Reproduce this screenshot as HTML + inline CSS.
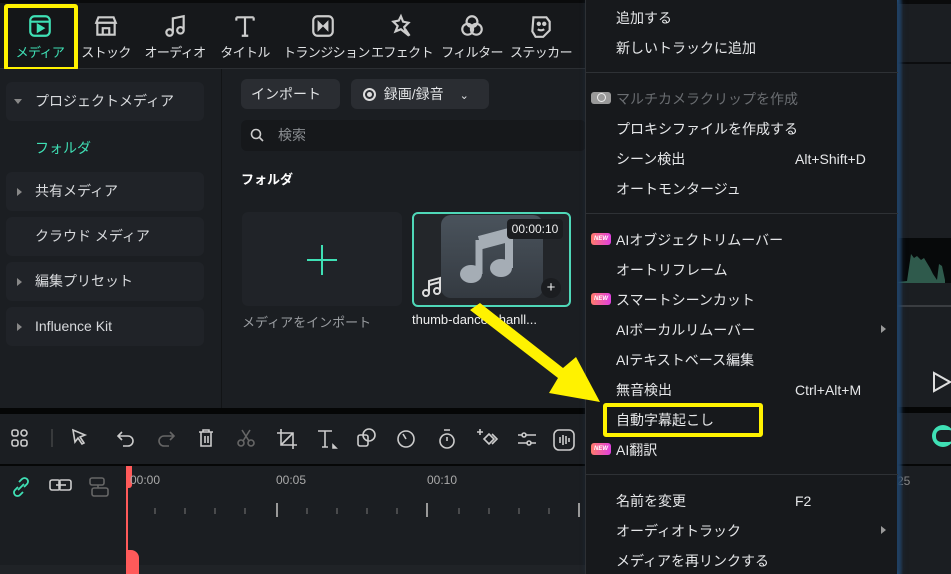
<!DOCTYPE html>
<html><head><meta charset="utf-8"><style>
*{margin:0;padding:0;box-sizing:border-box}
body{width:951px;height:574px;overflow:hidden;background:#1b1e22;font-family:"Liberation Sans","Noto Sans CJK JP",sans-serif;color:#d8dadd;position:relative}
.abs{position:absolute}
.top{left:0;top:0;width:951px;height:69px;background:#16181b;border-bottom:1px solid #2c2f33}
.tab{position:absolute;top:13px;width:70px;text-align:center;font-size:13px;color:#e0e2e4;white-space:nowrap;letter-spacing:-0.6px;line-height:18px}
.tab svg{display:block;margin:0 auto 5px}
.left{left:0;top:69px;width:222px;height:339px;background:#1b1e22;border-right:1px solid #121416}
.li{position:absolute;left:6px;width:198px;height:39px;background:#202328;border-radius:6px;font-size:14px;color:#d8dadd;line-height:39px;padding-left:29px}
.li.c:before{content:"";position:absolute;left:11px;top:16px;border-left:5px solid #888;border-top:4px solid transparent;border-bottom:4px solid transparent}
.btn{position:absolute;height:30px;background:#2a2d32;border-radius:6px;font-size:14px;line-height:30px;color:#e0e2e4}
.menu{left:585px;top:0;width:312px;height:574px;background:#17191c;border-left:1px solid #2d3034;box-shadow:3px 0 6px #1d3a5a}
.mi{position:absolute;left:30px;font-size:14px;color:#e6e7e9;white-space:nowrap;line-height:20px}
.sc{position:absolute;left:209px;font-size:14px;color:#e6e7e9;line-height:20px}
.sep{position:absolute;left:0;width:312px;height:1px;background:#2e3135}
.new{position:absolute;left:5px;width:20px;height:12px;border-radius:3px;background:linear-gradient(90deg,#ff7a6a,#e040e0);font-size:6px;color:#fff;font-weight:bold;text-align:center;line-height:12px;font-style:italic}
.arr{position:absolute;left:295px;border-left:5px solid #999;border-top:4px solid transparent;border-bottom:4px solid transparent}
.tb svg{position:absolute;top:428px}
</style></head><body>
<div class="abs top"></div>
<div class="abs" style="left:0;top:0;width:951px;height:3px;background:#0a0b0c"></div>
<div class="abs" style="left:4px;top:4px;width:74px;height:67px;border:4px solid #fff200;border-radius:3px;background:#141618"></div>
<div class="tab" style="left:5px;color:#3fe0b5"><svg width="26" height="26" viewBox="0 0 24 24" fill="none" stroke="#3fe0b5" stroke-width="2"><rect x="3" y="3" width="18" height="18" rx="4"/><line x1="3" y1="8" x2="21" y2="8"/><path d="M10 11l5 3-5 3z" fill="#3fe0b5"/></svg>メディア</div>
<div class="tab" style="left:71px"><svg width="26" height="26" viewBox="0 0 24 24" fill="none" stroke="#ccc" stroke-width="2"><path d="M4 9h16v11H4zM5 4h14l2 5H3zM9 20v-6h6v6"/></svg>ストック</div>
<div class="tab" style="left:140px"><svg width="26" height="26" viewBox="0 0 24 24" fill="none" stroke="#ccc" stroke-width="2"><circle cx="7" cy="18" r="3"/><circle cx="17" cy="16" r="3"/><path d="M10 18V5l10-2v13"/></svg>オーディオ</div>
<div class="tab" style="left:210px"><svg width="26" height="26" viewBox="0 0 24 24" fill="none" stroke="#ccc" stroke-width="2"><path d="M4 4h16M12 4v17M9 21h6M4 4v3M20 4v3"/></svg>タイトル</div>
<div class="tab" style="left:283px;width:80px"><svg width="26" height="26" viewBox="0 0 24 24" fill="none" stroke="#ccc" stroke-width="2"><rect x="3" y="3" width="18" height="18" rx="4"/><path d="M8 9l3 3-3 3zM16 9l-3 3 3 3z" fill="#ccc"/></svg>トランジション</div>
<div class="tab" style="left:367px"><svg width="26" height="26" viewBox="0 0 24 24" fill="none" stroke="#ccc" stroke-width="2"><path d="M11 3l2 5 5 1-4 4 2 6-5-4-5 2 2-5-4-4 5-1z M15 15l4 6"/></svg>エフェクト</div>
<div class="tab" style="left:437px"><svg width="26" height="26" viewBox="0 0 24 24" fill="none" stroke="#ccc" stroke-width="2"><circle cx="12" cy="8" r="5"/><circle cx="8" cy="15" r="5"/><circle cx="16" cy="15" r="5"/></svg>フィルター</div>
<div class="tab" style="left:506px"><svg width="26" height="26" viewBox="0 0 24 24" fill="none" stroke="#ccc" stroke-width="2"><path d="M5 4h12l3 4v8l-6 6H7l-3-5z"/><circle cx="10" cy="10" r="1" fill="#ccc"/><circle cx="15" cy="10" r="1" fill="#ccc"/><path d="M9 15q3 2 6 0"/></svg>ステッカー</div>
<div class="abs" style="left:903px;top:35px;font-size:14px;color:#3fe0b5">ソース</div>

<div class="abs left"></div>
<div class="li" style="top:82px">プロジェクトメディア</div>
<div class="abs" style="top:99px;left:14px;width:0;border-top:5px solid #888;border-left:4px solid transparent;border-right:4px solid transparent"></div>
<div class="abs" style="left:35px;top:138px;font-size:14px;color:#3fe0b5">フォルダ</div>
<div class="li c" style="top:172px">共有メディア</div>
<div class="li" style="top:217px">クラウド メディア</div>
<div class="li c" style="top:262px">編集プリセット</div>
<div class="li c" style="top:307px">Influence Kit</div>

<div class="btn" style="left:241px;top:79px;width:99px;padding-left:10px">インポート <span style="font-size:11px;margin-left:8px">⌄</span></div>
<div class="btn" style="left:351px;top:79px;width:138px;padding-left:12px"><span style="display:inline-block;width:13px;height:13px;border:2px solid #ddd;border-radius:50%;vertical-align:-2px;position:relative"><span style="position:absolute;left:2px;top:2px;width:5px;height:5px;background:#ddd;border-radius:50%"></span></span>&nbsp;&nbsp;録画/録音 <span style="font-size:11px;margin-left:12px">⌄</span></div>
<div class="abs" style="left:241px;top:120px;width:345px;height:31px;background:#16181b;border-radius:6px;font-size:14px;color:#8a8d91;line-height:31px;padding-left:37px">検索</div>
<svg class="abs" style="left:250px;top:128px" width="14" height="14" viewBox="0 0 14 14" fill="none" stroke="#ccc" stroke-width="1.6"><circle cx="6" cy="6" r="4.5"/><path d="M9.5 9.5l3.5 3.5"/></svg>
<div class="abs" style="left:241px;top:169px;font-size:13px;color:#fff;font-weight:bold">フォルダ</div>
<div class="abs" style="left:242px;top:212px;width:160px;height:94px;background:#202328;border-radius:6px"></div>
<svg class="abs" style="left:306px;top:244px" width="32" height="32"><path d="M16 1v30M1 16h30" stroke="#3fe0b5" stroke-width="2"/></svg>
<div class="abs" style="left:242px;top:312px;font-size:13px;color:#9a9da1">メディアをインポート</div>
<div class="abs" style="left:412px;top:212px;width:159px;height:95px;border:2px solid #4fd8b8;border-radius:6px;background:#23262a;overflow:hidden">
<div class="abs" style="left:27px;top:1px;width:102px;height:83px;border-radius:10px;background:linear-gradient(#4a535c,#343a41)"></div>
<svg class="abs" style="left:45px;top:14px" width="60" height="58" viewBox="0 0 60 58"><path d="M20 12l30-8v36" stroke="#a5adb5" stroke-width="8" fill="none"/><path d="M20 12v34" stroke="#a5adb5" stroke-width="7"/><path d="M20 12l30-8v10l-30 8z" fill="#a5adb5"/><ellipse cx="12" cy="46" rx="11" ry="9" fill="#a5adb5"/><ellipse cx="42" cy="40" rx="11" ry="9" fill="#a5adb5"/></svg>
<div class="abs" style="left:93px;top:5px;width:56px;height:20px;background:#1b1d20;border-radius:4px;font-size:12px;color:#eee;line-height:20px;text-align:center">00:00:10</div>
<div class="abs" style="left:127px;top:64px;width:20px;height:20px;background:#1b1d20;border-radius:50%;color:#eee;font-size:15px;line-height:19px;text-align:center">+</div>
<svg class="abs" style="left:7px;top:62px" width="22" height="22" viewBox="0 0 22 22" fill="none" stroke="#ddd" stroke-width="2"><circle cx="5" cy="17" r="3"/><circle cx="16" cy="15" r="3"/><path d="M8 17V5l11-3v13M8 9l11-3"/></svg>
</div>
<div class="abs" style="left:412px;top:312px;font-size:13px;color:#eee">thumb-dance-chanll...</div>

<div class="abs" style="left:0;top:408px;width:600px;height:6px;background:#050606"></div>
<div class="abs" style="left:0;top:414px;width:600px;height:50px;background:#1b1e22"></div>
<div class="abs" style="left:0;top:464px;width:600px;height:2px;background:#060707"></div>
<div class="abs" style="left:0;top:466px;width:600px;height:108px;background:#1b1e22"></div>
<div class="abs" style="left:0;top:565px;width:600px;height:9px;background:#202327"></div>
<div class="tb">
<svg style="left:10px" width="20" height="20" viewBox="0 0 20 20" fill="none" stroke="#ccc" stroke-width="1.6"><rect x="2" y="2" width="6" height="6" rx="2"/><circle cx="14" cy="5" r="3"/><rect x="2" y="12" width="6" height="6" rx="2"/><rect x="11" y="12" width="6" height="6" rx="2"/></svg>
<svg style="left:50px" width="4" height="20"><path d="M2 1v18" stroke="#555" stroke-width="1"/></svg>
<svg style="left:70px" width="20" height="20" viewBox="0 0 20 20" fill="none" stroke="#ccc" stroke-width="1.6"><path d="M3 2l12 5-5 2 4 6-2 1-4-6-3 4z"/></svg>
<svg style="left:116px" width="20" height="20" viewBox="0 0 20 20" fill="none" stroke="#ccc" stroke-width="1.6"><path d="M6 4L2 8l4 4M2 8h10a5 5 0 010 10H7"/></svg>
<svg style="left:156px" width="20" height="20" viewBox="0 0 20 20" fill="none" stroke="#666" stroke-width="1.6"><path d="M14 4l4 4-4 4M18 8H8a5 5 0 000 10h5"/></svg>
<svg style="left:196px" width="20" height="20" viewBox="0 0 20 20" fill="none" stroke="#ccc" stroke-width="1.6"><path d="M3 4h14M7 4V2h6v2M5 4v14h10V4M9 8v7M12 8v7"/></svg>
<svg style="left:236px" width="20" height="20" viewBox="0 0 20 20" fill="none" stroke="#666" stroke-width="1.6"><circle cx="5" cy="15" r="3"/><circle cx="15" cy="15" r="3"/><path d="M7 13L14 2M13 13L6 2"/></svg>
<svg style="left:276px" width="22" height="22" viewBox="0 0 22 22" fill="none" stroke="#ccc" stroke-width="1.6"><path d="M5 1v16h16M1 5h16v16M5 17L17 5"/></svg>
<svg style="left:316px" width="22" height="22" viewBox="0 0 22 22" fill="none" stroke="#ccc" stroke-width="1.6"><path d="M2 3h14M9 3v16M6 19h6"/><path d="M17 17l3 3h-3z" fill="#ccc"/></svg>
<svg style="left:356px" width="22" height="22" viewBox="0 0 22 22" fill="none" stroke="#ccc" stroke-width="1.6"><rect x="2" y="7" width="10" height="11" rx="2"/><circle cx="13" cy="7" r="6"/></svg>
<svg style="left:396px" width="22" height="22" viewBox="0 0 22 22" fill="none" stroke="#ccc" stroke-width="1.6"><circle cx="10" cy="11" r="8"/><path d="M10 11L7 6"/></svg>
<svg style="left:436px" width="22" height="22" viewBox="0 0 22 22" fill="none" stroke="#ccc" stroke-width="1.6"><circle cx="11" cy="13" r="7"/><path d="M8 2h6M11 13V9"/></svg>
<svg style="left:476px" width="24" height="22" viewBox="0 0 24 22" fill="none" stroke="#ccc" stroke-width="1.6"><path d="M4 1v6M1 4h6M8 11l5-5 5 5-5 5zM16 6l5 5-5 5"/></svg>
<svg style="left:516px" width="22" height="22" viewBox="0 0 22 22" fill="none" stroke="#ccc" stroke-width="1.6"><path d="M2 7h18M2 15h18"/><circle cx="8" cy="7" r="2" fill="#1b1e22"/><circle cx="13" cy="15" r="2" fill="#1b1e22"/></svg>
<svg style="left:553px" width="24" height="24" viewBox="0 0 24 24" fill="none" stroke="#ccc" stroke-width="1.6"><rect x="1" y="2" width="20" height="20" rx="5"/><path d="M7 9v6M10 7v10M13 8v8M16 10v4"/></svg>
</div>
<svg class="abs" style="left:10px;top:476px" width="22" height="22" viewBox="0 0 22 22" fill="none" stroke="#3fe0b5" stroke-width="1.8"><path d="M9 6l3-3a3 3 0 015 5l-3 3M13 16l-3 3a3 3 0 01-5-5l3-3M8 14l6-6"/></svg>
<svg class="abs" style="left:48px;top:476px" width="26" height="20" viewBox="0 0 26 20" fill="none" stroke="#ccc" stroke-width="1.6"><rect x="2" y="4" width="10" height="10" rx="2"/><rect x="11" y="4" width="12" height="10" rx="2"/><path d="M8 9h10"/></svg>
<svg class="abs" style="left:88px;top:476px" width="22" height="22" viewBox="0 0 22 22" fill="none" stroke="#666" stroke-width="1.6"><rect x="2" y="2" width="14" height="7" rx="2"/><rect x="4" y="12" width="16" height="8" rx="2"/><path d="M10 9v3"/></svg>
<div class="abs" style="left:126px;top:466px;height:108px;background:#ff5a5a;width:2px"></div>
<div class="abs" style="left:126px;top:466px;width:6px;height:22px;background:#ff5a5a;border-radius:0 0 3px 0"></div>
<div class="abs" style="left:126px;top:550px;width:13px;height:24px;background:#ff5a5a;border-radius:0 8px 0 0"></div>
<div class="abs" style="left:130px;top:473px;font-size:12px;color:#aaa">00:00</div>
<div class="abs" style="left:276px;top:473px;font-size:12px;color:#aaa">00:05</div>
<div class="abs" style="left:427px;top:473px;font-size:12px;color:#aaa">00:10</div>
<svg class="abs" style="left:126px;top:500px" width="460" height="20"><g stroke="#777" stroke-width="1"><path d="M29 8v6M59 8v6M89 8v6M119 8v6M181 8v6M211 8v6M241 8v6M271 8v6M333 8v6M363 8v6M393 8v6M423 8v6"/></g><g stroke="#999" stroke-width="2"><path d="M151 3v14M301 3v14M453 3v14"/></g></svg>

<div class="abs" style="left:897px;top:0;width:54px;height:574px;background:#1b1e22"></div>
<div class="abs" style="left:897px;top:0;width:54px;height:4px;background:#0a0b0c"></div>
<div class="abs" style="left:897px;top:62px;width:54px;height:2px;background:#0c0d0f"></div>
<div class="abs" style="left:897px;top:238px;width:54px;height:45px;background:#07090a"></div>
<svg class="abs" style="left:897px;top:238px" width="54" height="45"><path d="M0 44L10 43 14 16 17 20 20 18 24 22 27 20 30 25 33 30 36 36 40 42 42 26 45 28 48 42V45H0z" fill="#2f5a4c"/></svg>
<div class="abs" style="left:897px;top:305px;width:54px;height:2px;background:#3a3d41"></div>
<svg class="abs" style="left:932px;top:371px" width="19" height="22"><path d="M2 2l16 9-16 9z" fill="none" stroke="#ddd" stroke-width="2"/></svg>
<div class="abs" style="left:897px;top:407px;width:54px;height:6px;background:#050606"></div>
<div class="abs" style="left:932px;top:425px;width:22px;height:22px;border-radius:50%;background:#3fe0b5"></div>
<div class="abs" style="left:936px;top:430px;width:18px;height:12px;border-radius:5px;background:#1b1e22"></div>
<div class="abs" style="left:897px;top:464px;width:54px;height:2px;background:#060707"></div>
<div class="abs" style="left:897px;top:474px;font-size:12px;color:#888">25</div>
<div class="abs" style="left:897px;top:0;width:6px;height:574px;background:linear-gradient(90deg,#2b5a8a,rgba(30,60,90,0))"></div>

<div class="abs menu">
<div class="mi" style="top:8px">追加する</div>
<div class="mi" style="top:38px">新しいトラックに追加</div>
<div class="sep" style="top:72px"></div>
<div class="abs" style="left:5px;top:92px;width:20px;height:12px;border-radius:3px;background:#9a9a9a"></div>
<div class="abs" style="left:11px;top:93px;width:9px;height:9px;border:1.5px solid #eee;border-radius:50%"></div>
<div class="mi" style="top:89px;color:#6a6d71">マルチカメラクリップを作成</div>
<div class="mi" style="top:119px">プロキシファイルを作成する</div>
<div class="mi" style="top:149px">シーン検出</div><div class="sc" style="top:149px">Alt+Shift+D</div>
<div class="mi" style="top:179px">オートモンタージュ</div>
<div class="sep" style="top:213px"></div>
<div class="new" style="top:233px">NEW</div>
<div class="mi" style="top:230px">AIオブジェクトリムーバー</div>
<div class="mi" style="top:260px">オートリフレーム</div>
<div class="new" style="top:293px">NEW</div>
<div class="mi" style="top:290px">スマートシーンカット</div>
<div class="mi" style="top:320px">AIボーカルリムーバー</div><div class="arr" style="top:325px"></div>
<div class="mi" style="top:350px">AIテキストベース編集</div>
<div class="mi" style="top:380px">無音検出</div><div class="sc" style="top:380px">Ctrl+Alt+M</div>
<div class="abs" style="left:17px;top:403px;width:160px;height:34px;border:4px solid #fff200;border-radius:3px"></div>
<div class="mi" style="top:410px">自動字幕起こし</div>
<div class="new" style="top:443px">NEW</div>
<div class="mi" style="top:440px">AI翻訳</div>
<div class="sep" style="top:474px"></div>
<div class="mi" style="top:491px">名前を変更</div><div class="sc" style="top:491px">F2</div>
<div class="mi" style="top:521px">オーディオトラック</div><div class="arr" style="top:526px"></div>
<div class="mi" style="top:551px">メディアを再リンクする</div>
</div>

<svg class="abs" style="left:0;top:0" width="951" height="574"><polygon points="470,310 480,303 563,368 576,357 600,402 549,393 558,378" fill="#fff200"/></svg>
</body></html>
